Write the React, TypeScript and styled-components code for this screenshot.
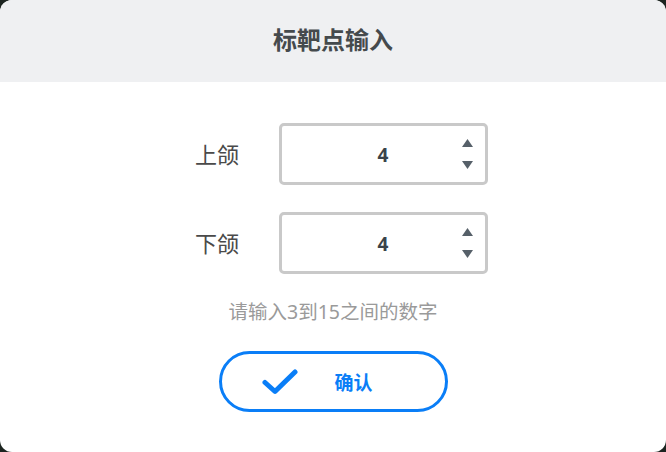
import React from 'react'
import styled, { createGlobalStyle } from 'styled-components'

const Global = createGlobalStyle`
  html, body {
    margin: 0;
    padding: 0;
    background: #1c2420;
  }
  * { box-sizing: border-box; }
`

const Dialog = styled.div`
  width: 666px;
  height: 452px;
  background: #fff;
  border-radius: 12px;
  overflow: hidden;
  display: flex;
  flex-direction: column;
  font-family: "Noto Sans", "Noto Sans CJK SC", sans-serif;
`

const Header = styled.div`
  height: 82px;
  background: #eff0f2;
  display: flex;
  align-items: center;
  justify-content: center;
  padding-bottom: 2px;
`

const Title = styled.h1`
  margin: 0;
  font-size: 24px;
  line-height: 32px;
  font-weight: 700;
  color: #454a4d;
`

const Body = styled.div`
  display: flex;
  flex-direction: column;
  align-items: center;
  padding-top: 41px;
`

const Rows = styled.div`
  display: flex;
  flex-direction: column;
  gap: 27px;
  margin-left: 17px;
`

const Row = styled.div`
  display: flex;
  align-items: center;
  gap: 38px;
`

const Label = styled.span`
  font-size: 22px;
  color: #4a4a4a;
  width: 46px;
  padding-bottom: 2px;
`

const Box = styled.div`
  width: 209px;
  height: 62px;
  border: 3px solid #c9c9c9;
  border-radius: 5px;
  display: flex;
  align-items: center;
`

const Value = styled.span`
  flex: 1;
  text-align: center;
  font-size: 19px;
  font-weight: 700;
  color: #3a4349;
  padding-left: 34px;
  padding-top: 1px;
`

const Spin = styled.div`
  width: 34px;
  display: flex;
  flex-direction: column;
  align-items: center;
  gap: 14px;
  margin-right: 1px;
`

const Hint = styled.p`
  margin: 25px 0 0;
  font-size: 19.5px;
  line-height: 26px;
  color: #9a9a9a;
`

const Confirm = styled.button`
  margin-top: 26px;
  width: 229px;
  height: 61px;
  border: 3px solid #0a7ef7;
  border-radius: 31px;
  background: #fff;
  display: flex;
  align-items: center;
  padding: 0 0 0 40px;
  cursor: pointer;
  font-family: inherit;
`

const ConfirmText = styled.span`
  margin-left: 37px;
  font-size: 19px;
  font-weight: 700;
  color: #0a7ef7;
`

function Arrow({ up }: { up?: boolean }) {
  return (
    <svg width="11" height="8" viewBox="0 0 11 8">
      <path d={up ? 'M5.5 0L11 8H0z' : 'M0 0h11L5.5 8z'} fill="#566069" />
    </svg>
  )
}

function Field({ label, value }: { label: string; value: number }) {
  return (
    <Row>
      <Label>{label}</Label>
      <Box>
        <Value>{value}</Value>
        <Spin>
          <Arrow up />
          <Arrow />
        </Spin>
      </Box>
    </Row>
  )
}

export default function App() {
  return (
    <>
      <Global />
      <Dialog>
        <Header>
          <Title>标靶点输入</Title>
        </Header>
        <Body>
          <Rows>
            <Field label="上颌" value={4} />
            <Field label="下颌" value={4} />
          </Rows>
          <Hint>请输入3到15之间的数字</Hint>
          <Confirm>
            <svg width="36" height="26" viewBox="0 0 36 26">
              <path
                d="M3 13.5L13 22.5L33 3"
                fill="none"
                stroke="#0a7ef7"
                strokeWidth="5"
                strokeLinecap="round"
                strokeLinejoin="round"
              />
            </svg>
            <ConfirmText>确认</ConfirmText>
          </Confirm>
        </Body>
      </Dialog>
    </>
  )
}
